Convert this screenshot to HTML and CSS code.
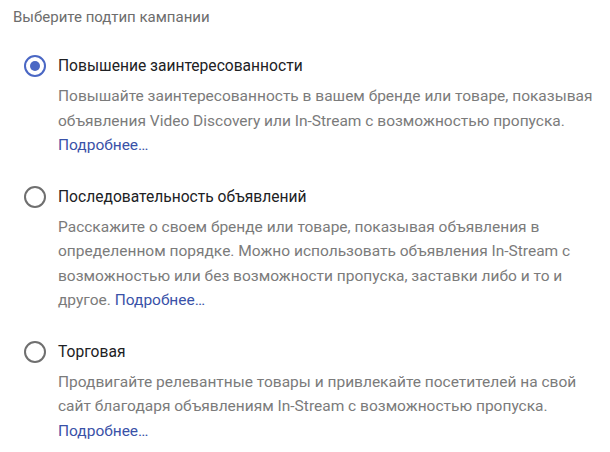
FILE: index.html
```html
<!DOCTYPE html>
<html lang="ru">
<head>
    <meta charset="UTF-8">
    <meta name="viewport" content="width=device-width, initial-scale=1.0">
    <title>Подтип кампании</title>
    <link rel="stylesheet" href="styles.css">
</head>
<body>
    <div class="subtype-panel">
        <div class="panel-title">Выберите подтип кампании</div>

        <div class="option-list">
            <!-- Awareness -->
            <label class="option">
                <span class="radio checked"></span>
                <span class="option-body">
                    <span class="option-title">Повышение заинтересованности</span>
                    <span class="option-text">Повышайте заинтересованность в вашем бренде или товаре, показывая объявления Video Discovery или In-Stream с возможностью пропуска. <a class="more-link" href="#">Подробнее…</a></span>
                </span>
            </label>

            <!-- Sequence -->
            <label class="option">
                <span class="radio"></span>
                <span class="option-body">
                    <span class="option-title">Последовательность объявлений</span>
                    <span class="option-text">Расскажите о своем бренде или товаре, показывая объявления в определенном порядке. Можно использовать объявления In-Stream с возможностью или без возможности пропуска, заставки либо и то и другое. <a class="more-link" href="#">Подробнее…</a></span>
                </span>
            </label>

            <!-- Shopping -->
            <label class="option">
                <span class="radio"></span>
                <span class="option-body">
                    <span class="option-title">Торговая</span>
                    <span class="option-text">Продвигайте релевантные товары и привлекайте посетителей на свой сайт благодаря объявлениям In-Stream с возможностью пропуска. <a class="more-link" href="#">Подробнее…</a></span>
                </span>
            </label>
        </div>
    </div>
</body>
</html>
```

FILE: styles.css
```css
:root {
    --accent-blue: #4a67c4;
    --link-blue: #3a52a8;
    --text-primary: #202124;
    --text-secondary: #7b7b7b;
    --text-muted: #6d6d6d;
    --radio-gray: #6f6f6f;
}

* {
    margin: 0;
    padding: 0;
    box-sizing: border-box;
    font-family: Roboto, "Noto Sans", sans-serif;
}

body {
    background: #ffffff;
    color: var(--text-primary);
}

.subtype-panel {
    padding: 5px 13px 0 13px;
}

.panel-title {
    font-size: 15px;
    line-height: 24px;
    color: var(--text-muted);
}

.option-list {
    display: flex;
    flex-direction: column;
    gap: 27px;
    margin-top: 25px;
}

.option {
    display: flex;
    gap: 12px;
    padding-left: 11px;
    cursor: pointer;
}

.radio {
    flex: none;
    width: 22px;
    height: 22px;
    margin-top: 1px;
    border: 2.5px solid var(--radio-gray);
    border-radius: 50%;
    display: flex;
    align-items: center;
    justify-content: center;
}

.radio.checked {
    border-color: var(--accent-blue);
}

.radio.checked::after {
    content: "";
    width: 10px;
    height: 10px;
    border-radius: 50%;
    background: var(--accent-blue);
}

.option-body {
    display: flex;
    flex-direction: column;
    gap: 6px;
}

.option-title {
    font-size: 15.6px;
    line-height: 24px;
    color: var(--text-primary);
}

.option-text {
    font-size: 15.5px;
    line-height: 24.5px;
    color: var(--text-secondary);
}

.more-link {
    color: var(--link-blue);
    text-decoration: none;
}
```
